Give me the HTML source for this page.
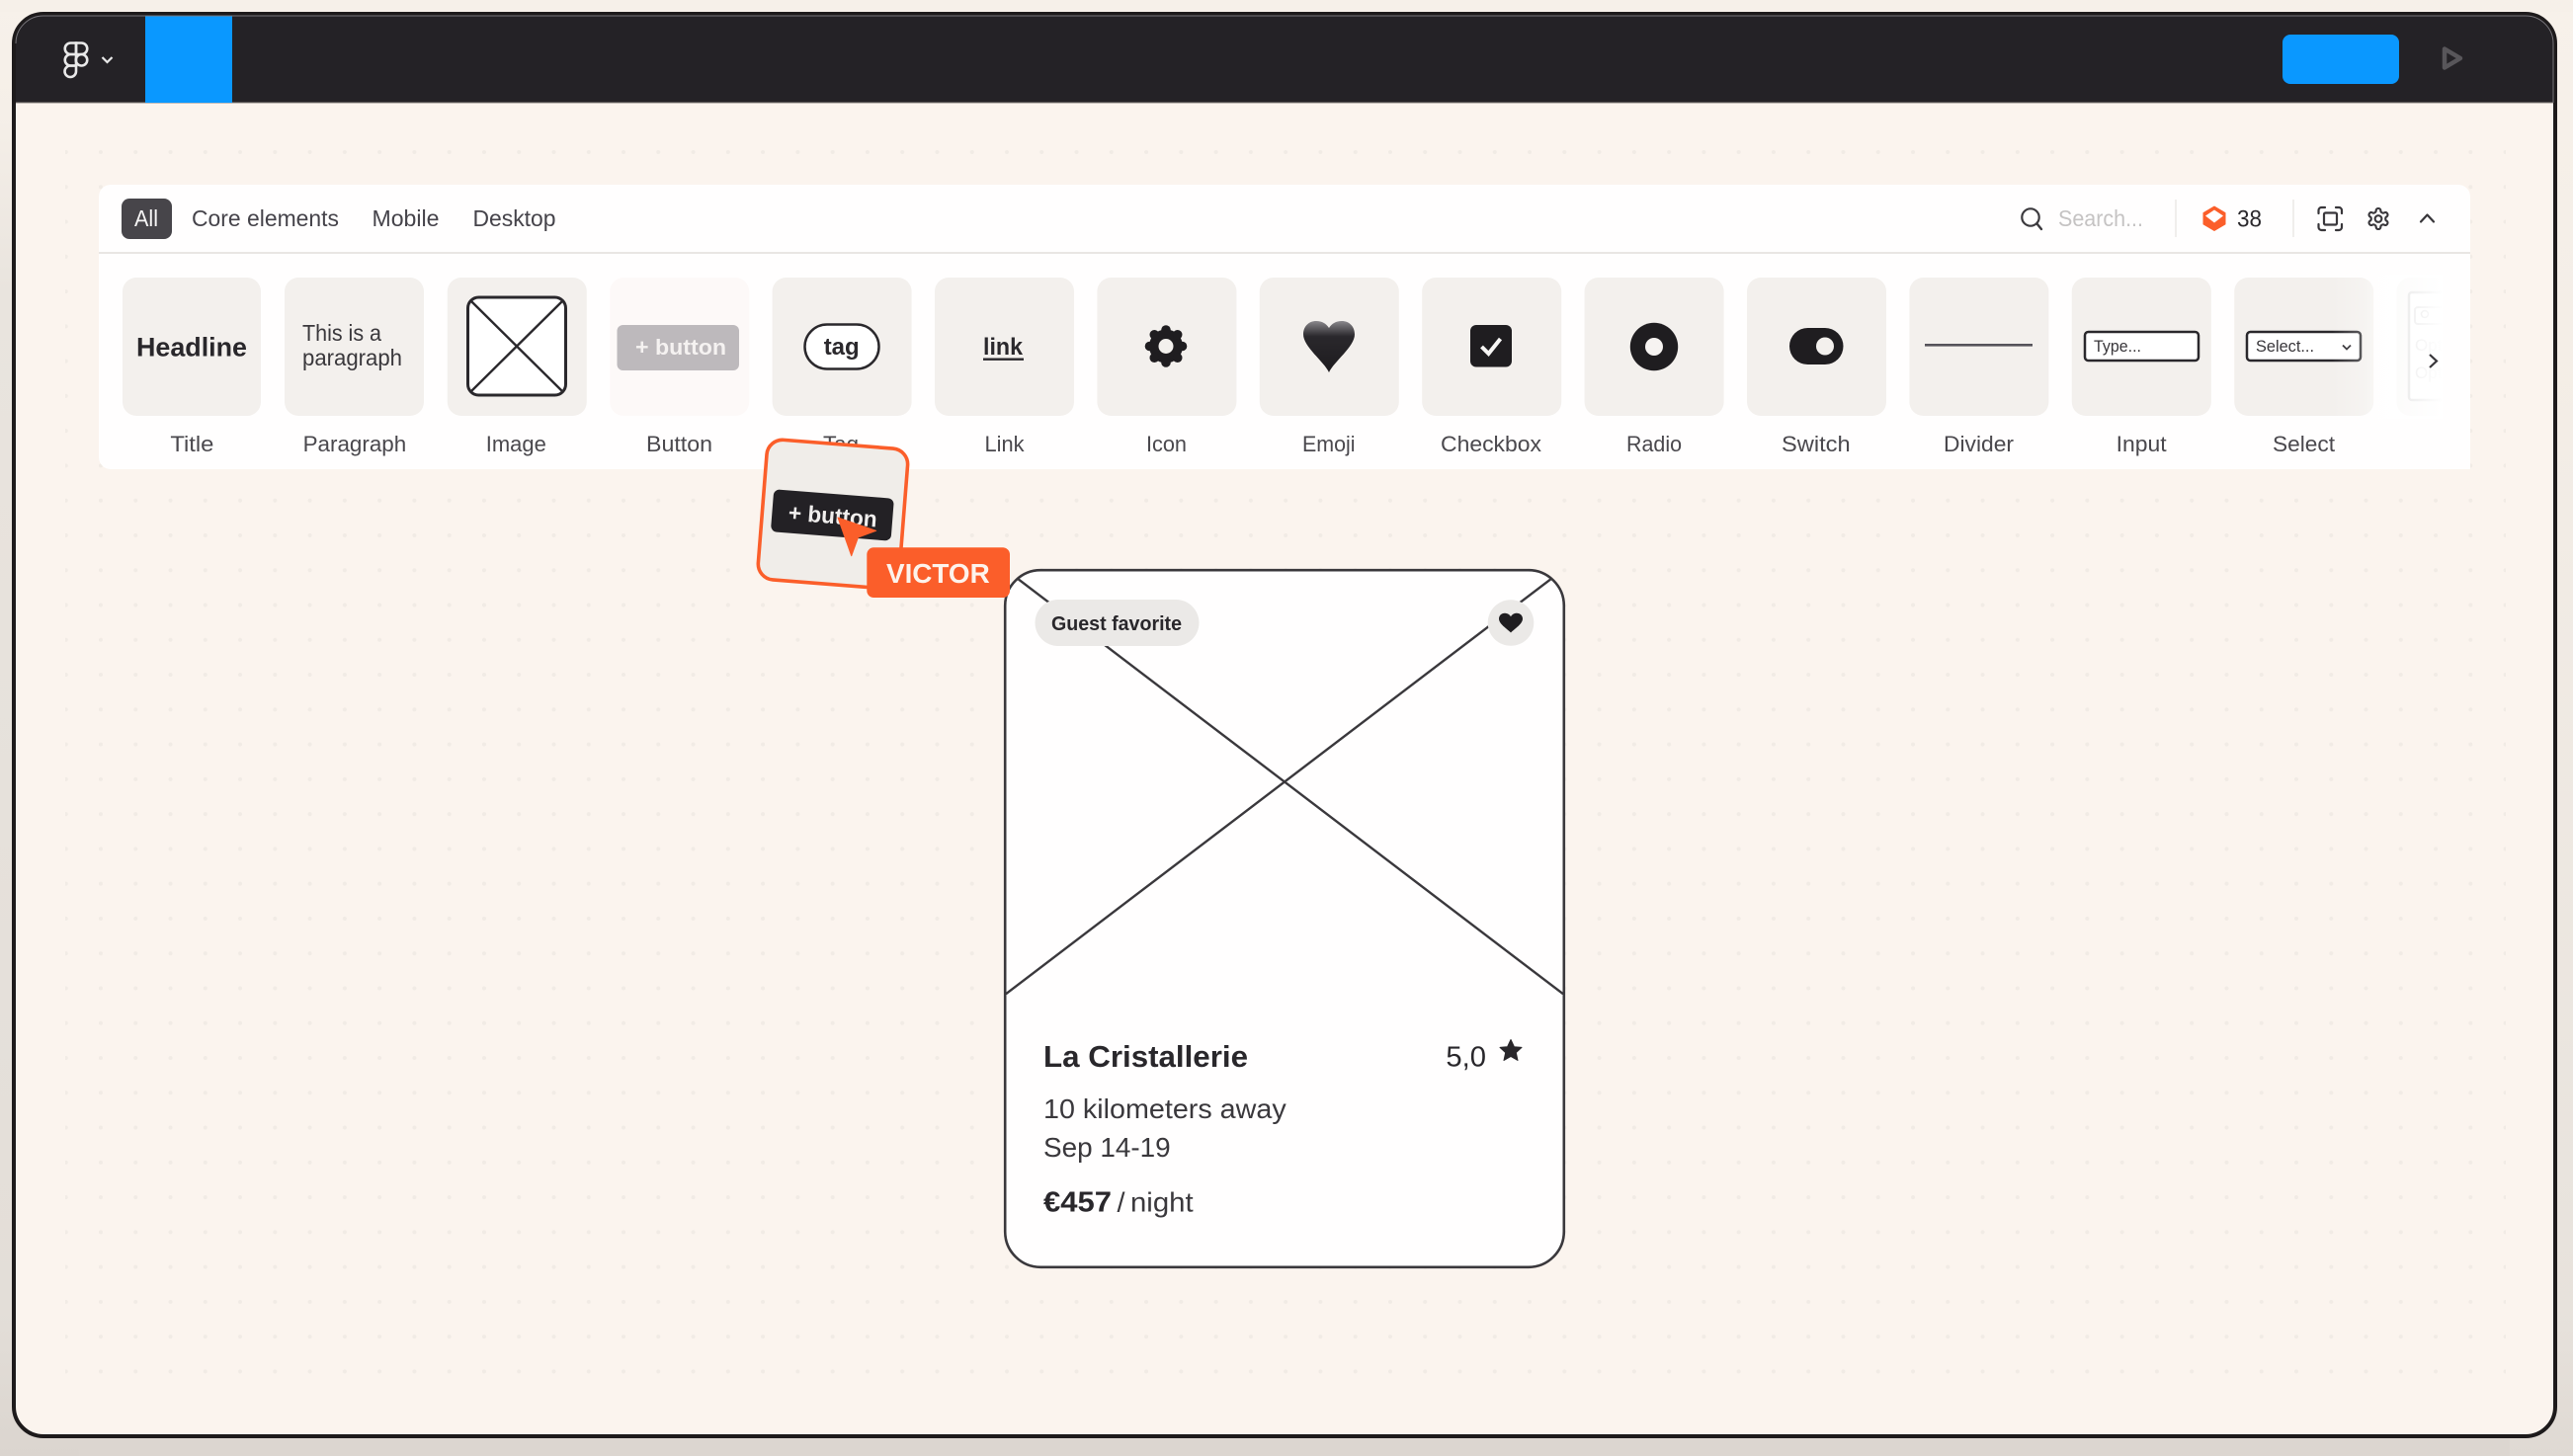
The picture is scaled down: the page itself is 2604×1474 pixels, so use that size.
<!DOCTYPE html>
<html lang="en">
<head>
<meta charset="utf-8">
<title>Wireframe kit</title>
<style>
html,body{margin:0;padding:0;width:2604px;height:1474px;overflow:hidden;background:#e6e1db}
svg{display:block;position:absolute;left:0;top:0}
text{font-family:"Liberation Sans",sans-serif}
.lb{font-size:22px;fill:#4a484d}
.tb{font-size:23px;fill:#45434a}
</style>
</head>
<body>
<svg width="2604" height="1474" viewBox="0 0 2604 1474" xmlns="http://www.w3.org/2000/svg">
<defs>
<linearGradient id="bgl" x1="0" y1="0" x2="0" y2="1">
<stop offset="0" stop-color="#f7f1ea"/><stop offset=".08" stop-color="#f5efe8"/><stop offset=".2" stop-color="#e9e4de"/><stop offset=".9" stop-color="#e3ded8"/><stop offset="1" stop-color="#dbd5cf"/>
</linearGradient>
<linearGradient id="bgr" x1="0" y1="0" x2="0" y2="1">
<stop offset="0" stop-color="#f7f1ea"/><stop offset=".3" stop-color="#f3ede6"/><stop offset=".9" stop-color="#e7e2dc"/><stop offset="1" stop-color="#dfd9d3"/>
</linearGradient>
<linearGradient id="fade" x1="0" y1="0" x2="1" y2="0">
<stop offset="0" stop-color="#fff" stop-opacity="0"/><stop offset=".3" stop-color="#fff" stop-opacity=".25"/><stop offset=".5" stop-color="#fff" stop-opacity=".72"/><stop offset="1" stop-color="#fff" stop-opacity="1"/>
</linearGradient>
<linearGradient id="heartg" x1="0" y1="0" x2="0" y2="1">
<stop offset="0" stop-color="#8a888c"/><stop offset=".3" stop-color="#2a282c"/><stop offset="1" stop-color="#1d1b1e"/>
</linearGradient>
<pattern id="dots" x="66.7" y="154" width="35.27" height="35.27" patternUnits="userSpaceOnUse">
<circle cx="0" cy="0" r="2" fill="#f1ebe5"/><circle cx="35.27" cy="0" r="2" fill="#f1ebe5"/><circle cx="0" cy="35.27" r="2" fill="#f1ebe5"/><circle cx="35.27" cy="35.27" r="2" fill="#f1ebe5"/>
</pattern>
<clipPath id="top"><path d="M16 104.5V44a28 28 0 0 1 28-28H2556a28 28 0 0 1 28 28V104.5Z"/></clipPath>
<clipPath id="imgclip"><path d="M1017 1007V612a36 36 0 0 1 36-36H1547a36 36 0 0 1 36 36V1007Z"/></clipPath>
<clipPath id="lastclip"><rect x="2425" y="281" width="47" height="140"/></clipPath>
</defs>

<!-- page background -->
<rect x="0" y="0" width="1302" height="1474" fill="url(#bgl)"/>
<rect x="1302" y="0" width="1302" height="1474" fill="url(#bgr)"/>
<rect x="80" y="1456" width="2460" height="18" fill="#dcd6d0"/>
<rect x="0" y="0" width="2604" height="12" fill="#f6f0e9"/>

<!-- window frame -->
<rect x="14" y="14" width="2572" height="1440" rx="30" fill="#fbf4ee" stroke="#1d1a1b" stroke-width="4"/>
<rect x="66" y="150" width="2470" height="1242" fill="url(#dots)"/>

<!-- top bar -->
<g clip-path="url(#top)">
<rect x="16" y="16" width="2568" height="88.5" fill="#242226"/>
<rect x="16" y="103.5" width="2568" height="1.5" fill="#8f8a86"/>
<rect x="147" y="16" width="88" height="88" fill="#0a98ff"/>
</g>
<path d="M16 44a28 28 0 0 1 28-28H2556a28 28 0 0 1 28 28" fill="none" stroke="#77757a" stroke-width="1"/>
<path d="M2584 44V104" stroke="#77757a" stroke-width="1"/>
<g fill="none" stroke="#e9e9e9" stroke-width="2.6">
<path d="M77 43.5H71.5a5.75 5.75 0 0 0 0 11.5H77Z"/>
<path d="M77 43.5H82.5a5.75 5.75 0 0 1 0 11.5H77Z"/>
<path d="M77 55H71.5a5.75 5.75 0 0 0 0 11.5H77Z"/>
<circle cx="82.5" cy="60.75" r="5.75"/>
<path d="M71.5 66.5H77V72.25a5.75 5.75 0 1 1-5.5-5.75Z"/>
<path d="M103.5 58l5 5 5-5" stroke-width="2.2"/>
</g>
<rect x="2310" y="35" width="118" height="50" rx="8" fill="#0a98ff"/>
<path d="M2474 49.5V68.5L2490 59Z" fill="none" stroke="#58565a" stroke-width="4.5" stroke-linejoin="round"/>

<!-- components panel -->
<path d="M112 187H2488a12 12 0 0 1 12 12V475H112a12 12 0 0 1-12-12V199a12 12 0 0 1 12-12Z" fill="#fffefe"/>
<rect x="100" y="255" width="2400" height="2" fill="#e9e6e3"/>
<rect x="123" y="201" width="51" height="41" rx="8" fill="#47454a"/>
<text x="136" y="229" font-size="23" fill="#f7f6f6" textLength="24" lengthAdjust="spacingAndGlyphs">All</text>
<text class="tb" x="194" y="229" textLength="149" lengthAdjust="spacingAndGlyphs">Core elements</text>
<text class="tb" x="376.5" y="229" textLength="68" lengthAdjust="spacingAndGlyphs">Mobile</text>
<text class="tb" x="478.5" y="229" textLength="84" lengthAdjust="spacingAndGlyphs">Desktop</text>

<circle cx="2055" cy="220" r="8.7" fill="none" stroke="#3c3a3e" stroke-width="2.2"/>
<path d="M2061.5 226.5L2066 232" stroke="#3c3a3e" stroke-width="2.4" stroke-linecap="round"/>
<text x="2083" y="229" font-size="23" fill="#c5c3c3" textLength="86" lengthAdjust="spacingAndGlyphs">Search...</text>
<rect x="2201" y="202" width="2" height="38" fill="#f0eeec"/>
<path d="M2241 209L2252 215.5V227L2241 233.5L2230 227V215.5Z" fill="#fb5e2a" stroke="#fb5e2a" stroke-width="1" stroke-linejoin="round"/>
<path d="M2241 212.5L2250 218.5L2241 225.5L2232 218.5Z" fill="#fff"/>
<text x="2264" y="229.5" font-size="24" fill="#2a282c" textLength="25" lengthAdjust="spacingAndGlyphs">38</text>
<rect x="2320" y="202" width="2" height="38" fill="#f0eeec"/>
<g fill="none" stroke="#38363a" stroke-width="2.2" stroke-linecap="round">
<path d="M2346.5 216V213a3 3 0 0 1 3-3H2353M2364 210H2367a3 3 0 0 1 3 3V216M2370 227V230a3 3 0 0 1-3 3H2364M2353 233H2349.5a3 3 0 0 1-3-3V227"/>
<rect x="2352" y="215.5" width="13" height="12" rx="1.5"/>
</g>
<g transform="translate(2394.4,208.9) scale(1.05)" fill="none" stroke="#38363a" stroke-width="2">
<path d="M12.22 2h-.44a2 2 0 0 0-2 2v.18a2 2 0 0 1-1 1.73l-.43.25a2 2 0 0 1-2 0l-.15-.08a2 2 0 0 0-2.73.73l-.22.38a2 2 0 0 0 .73 2.73l.15.1a2 2 0 0 1 1 1.72v.51a2 2 0 0 1-1 1.74l-.15.09a2 2 0 0 0-.73 2.73l.22.38a2 2 0 0 0 2.73.73l.15-.08a2 2 0 0 1 2 0l.43.25a2 2 0 0 1 1 1.73V20a2 2 0 0 0 2 2h.44a2 2 0 0 0 2-2v-.18a2 2 0 0 1 1-1.73l.43-.25a2 2 0 0 1 2 0l.15.08a2 2 0 0 0 2.73-.73l.22-.39a2 2 0 0 0-.73-2.73l-.15-.08a2 2 0 0 1-1-1.74v-.5a2 2 0 0 1 1-1.74l.15-.09a2 2 0 0 0 .73-2.73l-.22-.38a2 2 0 0 0-2.73-.73l-.15.08a2 2 0 0 1-2 0l-.43-.25a2 2 0 0 1-1-1.73V4a2 2 0 0 0-2-2z"/>
<circle cx="12" cy="12" r="3.2"/>
</g>
<path d="M2450 224.5L2456.5 217.5L2463 224.5" fill="none" stroke="#38363a" stroke-width="2.2" stroke-linecap="round" stroke-linejoin="round"/>

<!-- cards -->
<g fill="#f3f0ed">
<rect x="124" y="281" width="140" height="140" rx="14"/>
<rect x="288" y="281" width="141" height="140" rx="14"/>
<rect x="452.8" y="281" width="141" height="140" rx="14"/>
<rect x="617.2" y="281" width="141" height="140" rx="14" fill="#fdf9f8"/>
<rect x="781.6" y="281" width="141" height="140" rx="14"/>
<rect x="946" y="281" width="141" height="140" rx="14"/>
<rect x="1110.4" y="281" width="141" height="140" rx="14"/>
<rect x="1274.8" y="281" width="141" height="140" rx="14"/>
<rect x="1439.2" y="281" width="141" height="140" rx="14"/>
<rect x="1603.6" y="281" width="141" height="140" rx="14"/>
<rect x="1768" y="281" width="141" height="140" rx="14"/>
<rect x="1932.4" y="281" width="141" height="140" rx="14"/>
<rect x="2096.8" y="281" width="141" height="140" rx="14"/>
<rect x="2261.2" y="281" width="141" height="140" rx="14"/>
</g>

<!-- card contents -->
<text x="138" y="360.5" font-size="27" font-weight="700" fill="#29272b" textLength="112" lengthAdjust="spacingAndGlyphs">Headline</text>
<text x="306" y="345" font-size="23" fill="#3a383c" textLength="80" lengthAdjust="spacingAndGlyphs">This is a</text>
<text x="306" y="370" font-size="23" fill="#3a383c" textLength="101" lengthAdjust="spacingAndGlyphs">paragraph</text>

<rect x="473.5" y="301" width="99" height="99" rx="11" fill="#fff" stroke="#2a282c" stroke-width="3"/>
<path d="M476 304L570 397M570 304L476 397" stroke="#2a282c" stroke-width="2.4" fill="none"/>

<rect x="624.5" y="329" width="123.5" height="46" rx="6" fill="#bdb9bc"/>
<text x="643" y="359" font-size="22" font-weight="700" fill="#f5f2f1" textLength="92" lengthAdjust="spacingAndGlyphs">+ button</text>

<rect x="814.5" y="328.5" width="75" height="45" rx="22.5" fill="#fff" stroke="#2a282c" stroke-width="2.5"/>
<text x="833.7" y="359" font-size="24" font-weight="700" fill="#2a282c" textLength="36" lengthAdjust="spacingAndGlyphs">tag</text>

<text x="995" y="359" font-size="24" font-weight="700" fill="#2a282c" textLength="40" lengthAdjust="spacingAndGlyphs">link</text>
<rect x="995" y="362.5" width="41" height="2.4" fill="#2a282c"/>

<g fill="#1f1d20">
<circle cx="1180" cy="350.5" r="17"/>
<circle cx="1180" cy="334" r="4.8"/><circle cx="1180" cy="367" r="4.8"/>
<circle cx="1163.5" cy="350.5" r="4.8"/><circle cx="1196.5" cy="350.5" r="4.8"/>
<circle cx="1168.3" cy="338.8" r="4.8"/><circle cx="1191.7" cy="338.8" r="4.8"/>
<circle cx="1168.3" cy="362.2" r="4.8"/><circle cx="1191.7" cy="362.2" r="4.8"/>
</g>
<circle cx="1180" cy="350.5" r="7.5" fill="#f3f0ed"/>

<path d="M1345 377C1340 366 1319 351 1319 338.5C1319 330 1325 325 1332 325C1338 325 1342 327.5 1345 332C1348 327.5 1352 325 1358 325C1365 325 1371 330 1371 338.5C1371 351 1350 366 1345 377Z" fill="url(#heartg)"/>

<rect x="1488" y="329" width="42" height="42.5" rx="6" fill="#1f1d20"/>
<path d="M1499.5 351L1506.5 358L1518.5 343" fill="none" stroke="#f7f6f5" stroke-width="4"/>

<circle cx="1674" cy="351" r="24.2" fill="#1f1d20"/>
<circle cx="1674" cy="351" r="9" fill="#f6f3f1"/>

<rect x="1811" y="332" width="54.5" height="37" rx="18.5" fill="#1f1d20"/>
<circle cx="1847" cy="350.5" r="9" fill="#f3f0ed"/>

<rect x="1948" y="348" width="109" height="2.6" fill="#55535a"/>

<rect x="2110" y="336" width="115" height="29" rx="3.5" fill="#fff" stroke="#2a282c" stroke-width="2.5"/>
<text x="2119" y="356" font-size="17" fill="#38363a" textLength="48" lengthAdjust="spacingAndGlyphs">Type...</text>

<rect x="2274" y="336" width="115" height="29" rx="3.5" fill="#fff" stroke="#2a282c" stroke-width="2.5"/>
<text x="2283" y="356" font-size="17" fill="#38363a" textLength="59" lengthAdjust="spacingAndGlyphs">Select...</text>
<path d="M2371 349.5L2375 353.5L2379 349.5" fill="none" stroke="#2a282c" stroke-width="1.8"/>

<g clip-path="url(#lastclip)">
<rect x="2425.6" y="281" width="60" height="140" rx="14" fill="#f3f0ed"/>
<rect x="2438" y="296" width="80" height="109" rx="3" fill="#fff" stroke="#9d9b9d" stroke-width="2.5"/>
<rect x="2444" y="311" width="40" height="17" rx="3" fill="#fff" stroke="#aaa8aa" stroke-width="2"/>
<circle cx="2454" cy="318" r="3.5" fill="none" stroke="#8c8a8c" stroke-width="1.5"/>
<text x="2444" y="355" font-size="17" fill="#aaa8aa">Opt</text>
<text x="2444" y="383" font-size="17" fill="#aaa8aa">Opt</text>
</g>
<rect x="2360" y="278" width="112" height="146" fill="url(#fade)"/>
<path d="M2459 359L2466 365.5L2459 372" fill="none" stroke="#38363a" stroke-width="2.2"/>

<!-- labels -->
<text class="lb" x="172.4" y="457" textLength="44" lengthAdjust="spacingAndGlyphs">Title</text>
<text class="lb" x="306.6" y="457" textLength="104.6" lengthAdjust="spacingAndGlyphs">Paragraph</text>
<text class="lb" x="491.8" y="457" textLength="61" lengthAdjust="spacingAndGlyphs">Image</text>
<text class="lb" x="654" y="457" textLength="67" lengthAdjust="spacingAndGlyphs">Button</text>
<text class="lb" x="833" y="457" textLength="36" lengthAdjust="spacingAndGlyphs">Tag</text>
<text class="lb" x="996.5" y="457" textLength="40" lengthAdjust="spacingAndGlyphs">Link</text>
<text class="lb" x="1160" y="457" textLength="41" lengthAdjust="spacingAndGlyphs">Icon</text>
<text class="lb" x="1318" y="457" textLength="53.5" lengthAdjust="spacingAndGlyphs">Emoji</text>
<text class="lb" x="1458" y="457" textLength="102" lengthAdjust="spacingAndGlyphs">Checkbox</text>
<text class="lb" x="1646" y="457" textLength="56" lengthAdjust="spacingAndGlyphs">Radio</text>
<text class="lb" x="1803" y="457" textLength="69.6" lengthAdjust="spacingAndGlyphs">Switch</text>
<text class="lb" x="1967" y="457" textLength="71" lengthAdjust="spacingAndGlyphs">Divider</text>
<text class="lb" x="2141.7" y="457" textLength="51" lengthAdjust="spacingAndGlyphs">Input</text>
<text class="lb" x="2300" y="457" textLength="63" lengthAdjust="spacingAndGlyphs">Select</text>

<!-- listing card -->
<rect x="1017.2" y="577.2" width="565.6" height="705.6" rx="36" fill="#fffefe" stroke="#3a383c" stroke-width="2.6"/>
<g clip-path="url(#imgclip)">
<path d="M1017 576L1583 1007M1583 576L1017 1007" stroke="#3a383c" stroke-width="2.4" fill="none"/>
</g>
<rect x="1047.5" y="607" width="166" height="47" rx="23.5" fill="#ebe9e7"/>
<text x="1064" y="638" font-size="20" font-weight="700" fill="#29272b" textLength="132" lengthAdjust="spacingAndGlyphs">Guest favorite</text>
<circle cx="1529" cy="630.5" r="23.3" fill="#ebe9e7"/>
<path d="M1529 640.5C1526 637 1517 632 1517 626.5C1517 623 1519.8 620.8 1523 620.8C1525.6 620.8 1527.6 622 1529 624.2C1530.4 622 1532.4 620.8 1535 620.8C1538.2 620.8 1541 623 1541 626.5C1541 632 1532 637 1529 640.5Z" fill="#1f1d20"/>

<text x="1056" y="1080" font-size="31" font-weight="700" fill="#29272b" textLength="207" lengthAdjust="spacingAndGlyphs">La Cristallerie</text>
<text x="1463.4" y="1079.5" font-size="29" fill="#29272b" textLength="40.6" lengthAdjust="spacingAndGlyphs">5,0</text>
<path d="M1529 1052.5L1532.4 1059.7L1540 1060.4L1534.3 1065.6L1536 1073.5L1529 1069.4L1522 1073.5L1523.7 1065.6L1518 1060.4L1525.6 1059.7Z" fill="#29272b" stroke="#29272b" stroke-width="1" stroke-linejoin="round"/>
<text x="1056" y="1132" font-size="28" fill="#3a383c" textLength="245.7" lengthAdjust="spacingAndGlyphs">10 kilometers away</text>
<text x="1056" y="1171" font-size="28" fill="#3a383c" textLength="128.7" lengthAdjust="spacingAndGlyphs">Sep 14-19</text>
<text x="1056" y="1226.5" font-size="29" font-weight="700" fill="#29272b" textLength="69" lengthAdjust="spacingAndGlyphs">€457</text>
<text x="1130.5" y="1226.5" font-size="28" fill="#3a383c" textLength="8" lengthAdjust="spacingAndGlyphs">/</text>
<text x="1144" y="1226.5" font-size="28" fill="#3a383c" textLength="63.6" lengthAdjust="spacingAndGlyphs">night</text>

<!-- dragged element -->
<g transform="rotate(4.5 843 520)">
<rect x="771.5" y="449.5" width="143" height="142" rx="16" fill="#f0ede9" stroke="#fb5e2a" stroke-width="3.6"/>
<rect x="781.5" y="500" width="122" height="43" rx="6" fill="#232125"/>
<text x="798" y="530" font-size="23" font-weight="700" fill="#f1efee" textLength="90" lengthAdjust="spacingAndGlyphs">+ button</text>
</g>
<path d="M848 524L886.7 537.3L868.5 544L861.7 562.7Z" fill="#fb5e2a" stroke="#fb5e2a" stroke-width="1" stroke-linejoin="round"/>
<rect x="877.3" y="554.3" width="144.7" height="50.7" rx="7" fill="#fb5e2a"/>
<text x="897" y="590" font-size="28" font-weight="700" fill="#fdf3ec" textLength="104.7" lengthAdjust="spacingAndGlyphs">VICTOR</text>
</svg>
</body>
</html>
